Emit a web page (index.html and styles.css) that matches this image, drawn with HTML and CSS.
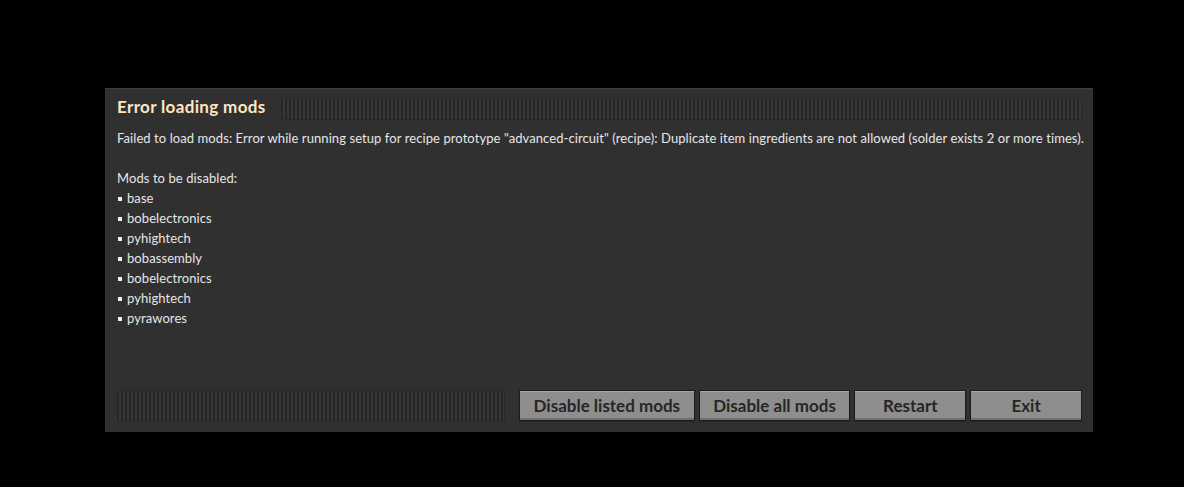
FILE: index.html
```html
<!DOCTYPE html>
<html lang="en">
<head>
    <meta charset="UTF-8">
    <title>Error loading mods</title>
    <link rel="stylesheet" href="styles.css">
</head>
<body>
    <div id="dialog">
        <div class="title-bar">
            <h1>Error loading mods</h1>
            <div class="filler"></div>
        </div>

        <div class="message">
            <p>Failed to load mods: Error while running setup for recipe prototype "advanced-circuit" (recipe): Duplicate item ingredients are not allowed (solder exists 2 or more times).</p>
            <p class="blank"></p>
            <p>Mods to be disabled:</p>
            <ul class="mod-list">
                <li>base</li>
                <li>bobelectronics</li>
                <li>pyhightech</li>
                <li>bobassembly</li>
                <li>bobelectronics</li>
                <li>pyhightech</li>
                <li>pyrawores</li>
            </ul>
        </div>

        <div class="footer">
            <div class="filler"></div>
            <button class="btn btn-listed">Disable listed mods</button>
            <button class="btn btn-all">Disable all mods</button>
            <button class="btn btn-restart">Restart</button>
            <button class="btn btn-exit">Exit</button>
        </div>
    </div>
</body>
</html>
```

FILE: styles.css
```css
body {
    margin: 0;
    padding: 88px 0 0 105px;
    background: #000;
    font-family: Lato, "Noto Sans", sans-serif;
    color: #e6e6e6;
}
#dialog {
    width: 988px;
    height: 344px;
    box-sizing: border-box;
    padding: 8px 11px 11px 12px;
    background: #313031;
    border-top: 1px solid #3d3d3d;
    display: flex;
    flex-direction: column;
}
.title-bar {
    display: flex;
    align-items: center;
    gap: 15px;
    height: 23px;
}
h1 {
    margin: 0;
    font-size: 17px;
    font-weight: bold;
    letter-spacing: 0.35px;
    color: #ffe6c0;
    line-height: 20px;
    align-self: flex-start;
}
.filler {
    flex: 1;
    align-self: stretch;
    background: repeating-linear-gradient(90deg, #262626 0 2px, #383838 2px 4px);
    box-shadow: inset 0 0 0 1px #2a2828;
}
.message {
    flex: 1;
    margin-top: 8px;
    font-size: 13px;
    letter-spacing: 0.08px;
    line-height: 20px;
}
.message p {
    margin: 0;
    white-space: nowrap;
}
.message p.blank {
    height: 20px;
}
.mod-list {
    list-style: none;
    margin: 0;
    padding: 0;
}
.mod-list li {
    position: relative;
    padding-left: 10px;
}
.mod-list li::before {
    content: "";
    position: absolute;
    left: 1px;
    top: 9px;
    width: 4px;
    height: 4px;
    background: #f0f0f0;
}
.footer {
    display: flex;
    height: 31px;
    gap: 4px;
}
.footer .filler {
    flex: 0 0 388px;
    margin-right: 10px;
}
.btn {
    height: 31px;
    padding: 0;
    background: #8e8e8e;
    border: 1px solid #1c1c1c;
    box-shadow: inset 0 1px 0 #a6a6a6, inset 0 -2px 0 #6f6f6f, 0 1px 0 #262626;
    font-family: Lato, "Noto Sans", sans-serif;
    font-size: 17px;
    font-weight: bold;
    color: #262626;
    line-height: 27px;
    cursor: pointer;
}
.btn-listed { width: 176px; }
.btn-all { width: 152px; }
.btn-restart { width: 112px; }
.btn-exit { width: 112px; }
```
